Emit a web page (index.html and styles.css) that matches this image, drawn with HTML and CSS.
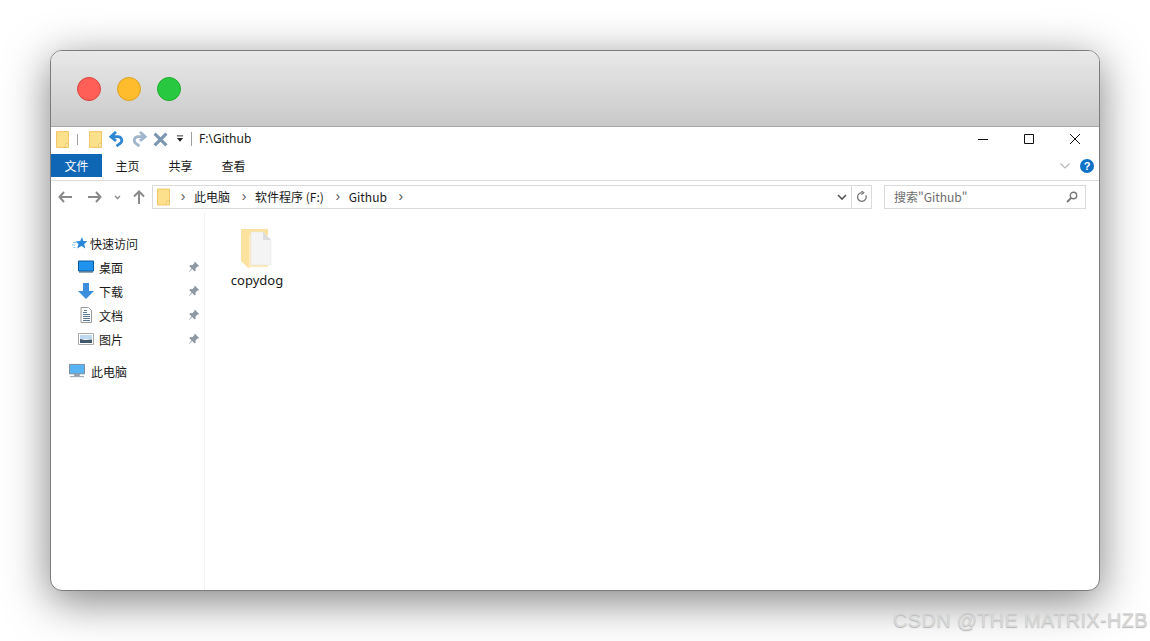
FILE: index.html
```html
<!DOCTYPE html>
<html lang="zh">
<head>
<meta charset="utf-8">
<title>F:\Github</title>
<link rel="stylesheet" href="styles.css">
</head>
<body>
<svg class="defs" width="0" height="0">
  <symbol id="folder" viewBox="0 0 14 18"><path d="M.5.5h13v17H.5z" fill="#fde08c" stroke="#f0c15f"/><path d="M10.500 17.500v-4h3" fill="#fff3c8" stroke="#f0c15f"/></symbol>
  <symbol id="pin" viewBox="0 0 12 12"><path d="M7 .8l4.200 4.200-1.100.7-.6-.2-2 2 .2 2-1 1-2.400-2.400L1 11l-.3-.3 2.900-3.300L1.300 5l1-1 2 .2 2-2-.1-.7z" fill="#8d98a3"/></symbol>
</svg>
<div class="window">
  <div class="mac-bar">
    <span class="light red"></span><span class="light amber"></span><span class="light green"></span>
  </div>
  <div class="qat">
    <svg class="ic-folder first"><use href="#folder"/></svg>
    <span class="qat-sep"></span>
    <svg class="ic-folder second"><use href="#folder"/></svg>
    <svg class="ic-undo" viewBox="0 0 16 17"><path d="M7.500 1 2 6l5.500 4.500M3 6h6.500a4 4 0 0 1 2 7.500L8 16" fill="none" stroke="#2f86d2" stroke-width="3"/></svg>
    <svg class="ic-redo" viewBox="0 0 16 17"><path d="M8.500 1 14 6l-5.500 4.500M13 6H6.500a4 4 0 0 0-2 7.500L8 16" fill="none" stroke="#a0b6cc" stroke-width="3"/></svg>
    <svg class="ic-x" viewBox="0 0 14 14"><path d="M1.500 1.500l11 11M12.500 1.500l-11 11" fill="none" stroke="#7c97b3" stroke-width="3"/></svg>
    <svg class="ic-drop" viewBox="0 0 9 8"><path d="M1 .5h7" stroke="#222" fill="none"/><path d="M1 3h7L4.500 7z" fill="#222"/></svg>
    <span class="qat-sep tall"></span>
    <span class="qat-title">F:\Github</span>
    <div class="win-ctrl">
      <svg viewBox="0 0 46 20"><path d="M18 10.500h10" stroke="#111" fill="none"/></svg>
      <svg viewBox="0 0 46 20"><path d="M18.500 5.500h9v9h-9z" stroke="#111" fill="none"/></svg>
      <svg viewBox="0 0 46 20"><path d="M18 5l10 10M28 5L18 15" stroke="#111" fill="none"/></svg>
    </div>
  </div>
  <div class="tabs">
    <span class="tab active">文件</span>
    <span class="tab">主页</span>
    <span class="tab">共享</span>
    <span class="tab">查看</span>
    <svg class="chev-up" viewBox="0 0 12 8"><path d="M1.500 1.500 6 6l4.500-4.500" fill="none" stroke="#b4b8bd" stroke-width="1.200"/></svg>
    <span class="help">?</span>
  </div>
  <div class="nav">
    <svg class="nav-arrow back" viewBox="0 0 14 12"><path d="M6 1 1.500 6 6 11M2 6h12" fill="none" stroke="#8a8a8a" stroke-width="2"/></svg>
    <svg class="nav-arrow fwd" viewBox="0 0 14 12"><path d="M8 1l4.500 5L8 11M12 6H0" fill="none" stroke="#8a8a8a" stroke-width="2"/></svg>
    <svg class="nav-small" viewBox="0 0 7 5"><path d="M1 1l2.500 2.500L6 1" fill="none" stroke="#8a8a8a" stroke-width="1.300"/></svg>
    <svg class="nav-up" viewBox="0 0 12 14"><path d="M1 6.500 6 1.500l5 5M6 2v12" fill="none" stroke="#8a8a8a" stroke-width="2"/></svg>
    <div class="address">
      <svg class="ic-folder crumb-folder"><use href="#folder"/></svg>
      <span class="crumb-sep">›</span><span class="crumb">此电脑</span>
      <span class="crumb-sep">›</span><span class="crumb">软件程序 (F:)</span>
      <span class="crumb-sep">›</span><span class="crumb">Github</span>
      <span class="crumb-sep">›</span>
      <svg class="addr-drop" viewBox="0 0 10 7"><path d="M1 1l4 4 4-4" fill="none" stroke="#555" stroke-width="1.600"/></svg>
      <span class="addr-refresh"><svg viewBox="0 0 12 12"><path d="M9.800 4.200A4.300 4.300 0 1 1 6 1.700M5.500 0l2.200 1.800-2.200 1.700" fill="none" stroke="#777" stroke-width="1.300"/></svg></span>
    </div>
    <div class="search">
      <span class="search-text">搜索"Github"</span>
      <svg viewBox="0 0 12 12"><circle cx="7.500" cy="4.500" r="3.200" fill="none" stroke="#777" stroke-width="1.400"/><path d="M5.200 6.800 1 11" stroke="#777" stroke-width="1.800" fill="none"/></svg>
    </div>
  </div>
  <div class="content">
    <aside class="side">
      <div class="side-item top">
        <svg class="s-ic star" viewBox="0 0 16 16"><path d="M10 2l1.300 4 4.200.3-3.300 2.700 1.100 4.500L9.500 11l-4.300 2.500 1.300-4.400L3.500 6.500l4.700-.5z" fill="#2a86d8"/><path d="M1 7.500h3M0 10h3M1.500 12.500h2" stroke="#8ec3ee"/></svg>
        <span>快速访问</span>
      </div>
      <div class="side-item sub">
        <svg class="s-ic" viewBox="0 0 16 13"><path d="M.5.500h15v10H.5z" fill="#1f93ee" stroke="#0a5a9e"/><path d="M1 11.500h14" stroke="#2a4f70"/></svg>
        <span>桌面</span><svg class="pin"><use href="#pin"/></svg>
      </div>
      <div class="side-item sub">
        <svg class="s-ic" viewBox="0 0 16 16"><path d="M5 0h6v8h5l-8 8-8-8h5z" fill="#3a8edb"/></svg>
        <span>下载</span><svg class="pin"><use href="#pin"/></svg>
      </div>
      <div class="side-item sub">
        <svg class="s-ic" viewBox="0 0 16 16"><path d="M3 .5h7.500l3 3v12H3z" fill="#fff" stroke="#999"/><path d="M6 3.500h3M5 5.500h4M5 7.500h7M5 9.500h7M5 11.500h7M5 13.500h7" stroke="#5b7a95"/></svg>
        <span>文档</span><svg class="pin"><use href="#pin"/></svg>
      </div>
      <div class="side-item sub">
        <svg class="s-ic" viewBox="0 0 16 12"><path d="M.5.500h15v11H.5z" fill="#fff" stroke="#aaa"/><path d="M2 2h12v4H2z" fill="#bcd9f0"/><path d="M2 6l5 1 7-.5V10H2z" fill="#40566b"/></svg>
        <span>图片</span><svg class="pin"><use href="#pin"/></svg>
      </div>
      <div class="side-item pc">
        <svg class="s-ic" viewBox="0 0 17 15"><path d="M.5.500h16v10H.5z" fill="#58b4f2" stroke="#7d8a96"/><path d="M6 11h5v1.500H6zM1 13.500h15" stroke="#8b98a4" fill="#9aa5af"/></svg>
        <span>此电脑</span>
      </div>
    </aside>
    <main class="files">
      <div class="file">
        <svg class="big-folder" viewBox="0 0 34 42"><path d="M1 1h27v6H9.500v34L1 33z" fill="#fbe39f"/><path d="M9.500 7H28v32H9.500z" fill="#fce9b6"/><path d="M11 4h12l8 8v25H11z" fill="#f4f4f4" stroke="#e8e8e8" stroke-width=".6"/><path d="M23 4l8 8h-8z" fill="#dcdcdc"/></svg>
        <span>copydog</span>
      </div>
    </main>
  </div>
</div>
<div class="watermark">CSDN @THE MATRIX-HZB</div>
</body>
</html>
```
FILE: styles.css
```css
* { box-sizing: border-box; }
html, body { margin: 0; height: 100%; }
body {
  width: 1150px;
  height: 641px;
  padding: 50px 50px 50px;
  background: #fff;
  overflow: hidden;
  position: relative;
  font-family: "Noto Sans CJK SC", "Liberation Sans", sans-serif;
  font-size: 12px;
  color: #1a1a1a;
}
.defs { position: absolute; }
.window {
  width: 1050px;
  height: 541px;
  border: 1px solid #7c7c7c;
  border-radius: 12px;
  background: #fff;
  box-shadow: 0 10px 44px rgba(0, 0, 0, .5);
  overflow: hidden;
  display: flex;
  flex-direction: column;
}
.mac-bar {
  height: 76px;
  flex: none;
  display: flex;
  align-items: center;
  gap: 16px;
  padding: 0 0 0 26px;
  background: linear-gradient(#e9e9e9, #c9c9c9);
  border-bottom: 1px solid #a8a8a8;
}
.light { width: 24px; height: 24px; border-radius: 50%; }
.red { background: #ff5f57; border: 1px solid #e0443e; }
.amber { background: #ffbd2e; border: 1px solid #dea123; }
.green { background: #28c840; border: 1px solid #1dad2b; }

.qat { height: 27px; flex: none; display: flex; align-items: center; padding: 0 0 3px 5px; }
.ic-folder { width: 13px; height: 17px; flex: none; }
.qat-sep { width: 1px; height: 11px; background: #a0a0a0; margin: 0 11px 0 8px; }
.qat-sep.tall { height: 14px; margin: 0 7px 0 7px; }
.ic-undo { width: 15px; height: 16px; margin-left: 7px; }
.ic-redo { width: 15px; height: 16px; margin-left: 8px; }
.ic-x { width: 15px; height: 15px; margin-left: 6px; }
.ic-drop { width: 8px; height: 8px; margin-left: 8px; }
.qat-title { font-family: "Noto Sans", sans-serif; font-size: 12px; margin-bottom: 2px; }
.win-ctrl { margin-left: auto; display: flex; padding-right: 1px; }
.win-ctrl svg { width: 46px; height: 20px; }

.tabs { height: 27px; flex: none; display: flex; align-items: center; border-bottom: 1px solid #dcdcdc; padding-bottom: 3px; }
.tab { width: 53px; height: 23px; line-height: 23px; text-align: center; }
.tab.active { width: 51px; background: #0f66b5; color: #fff; margin-right: -1px; }
.chev-up { width: 12px; height: 8px; margin-left: auto; }
.help {
  width: 14px; height: 14px; margin: 0 5px 0 9px; border-radius: 50%;
  background: #0f72c6; color: #fff; font: bold 11px/14px "Liberation Sans", sans-serif; text-align: center;
}

.nav { height: 32px; flex: none; display: flex; align-items: center; padding-left: 7px; }
.nav-arrow { width: 14px; height: 12px; }
.fwd { margin-left: 16px; }
.nav-small { width: 7px; height: 5px; margin-left: 12px; }
.nav-up { width: 12px; height: 14px; margin-left: 12px; }
.address {
  width: 720px; height: 24px; margin-left: 7px; display: flex; align-items: center;
  border: 1px solid #dadada; padding-left: 4px;
}
.crumb-folder { margin-right: 7px; height: 18px; width: 13px; }
.crumb-sep { width: 12px; text-align: center; color: #555; font: 14px "Liberation Sans", sans-serif; margin: 0 6px 2px 0; }
.crumb { margin: 0 8px 2px -1px; }
.addr-drop { width: 10px; height: 7px; margin-left: auto; margin-right: 4px; }
.addr-refresh { width: 20px; height: 22px; border-left: 1px solid #dadada; display: flex; align-items: center; justify-content: center; }
.addr-refresh svg { width: 12px; height: 12px; }
.search {
  width: 202px; height: 24px; margin-left: 12px; display: flex; align-items: center; justify-content: space-between;
  border: 1px solid #dadada; padding: 0 7px 0 9px; color: #6d6d6d;
}
.search-text { margin-bottom: 2px; }
.search svg { width: 12px; height: 12px; }

.content { flex: 1; display: flex; min-height: 0; }
.side { width: 154px; flex: none; border-right: 1px solid #f2f2f2; padding-top: 18px; }
.side-item { height: 24px; display: flex; align-items: center; position: relative; }
.side-item.top { padding-left: 21px; }
.side-item.top .s-ic { margin-right: 2px; }
.side-item.sub { padding-left: 27px; }
.side-item.sub .s-ic { margin-right: 5px; }
.side-item.pc { margin-top: 8px; padding-left: 18px; }
.side-item.pc .s-ic { margin-right: 6px; }
.s-ic { width: 16px; height: 16px; flex: none; }
.pin { width: 12px; height: 12px; margin-left: auto; margin-right: 4px; }
.files { flex: 1; padding: 15px 0 0 26px; }
.file { width: 52px; display: flex; flex-direction: column; align-items: center; }
.big-folder { width: 34px; height: 42px; }
.file span { font-family: "Noto Sans", sans-serif; font-size: 13px; margin-top: 1px; }

.watermark {
  position: absolute; left: 893px; top: 607px;
  font: 20px/26px "Liberation Sans", sans-serif;
  letter-spacing: .3px;
  color: #d8d8d8;
  text-shadow: 0 1px 1px #b5b5b5;
  white-space: nowrap;
}
```
